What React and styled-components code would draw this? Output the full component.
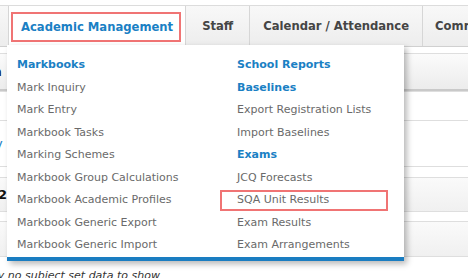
import styled, { createGlobalStyle, css } from 'styled-components';

const GlobalStyle = createGlobalStyle`
  html, body {
    margin: 0;
    padding: 0;
    background: #fff;
    font-family: "DejaVu Sans", Verdana, sans-serif;
  }
`;

const Page = styled.div`
  position: relative;
  width: 468px;
  height: 278px;
  overflow: hidden;
  padding-top: 5px;
  box-sizing: border-box;
`;

const NavBar = styled.nav`
  display: flex;
  height: 40px;
  border-top: 1px solid #dcdcdc;
  border-bottom: 1px solid #d0d0d0;
  background: linear-gradient(#f8f8f8, #ededed);
  padding-left: 8px;
`;

const NavItem = styled.div`
  position: relative;
  flex-shrink: 0;
  display: flex;
  align-items: center;
  justify-content: center;
  padding: 0 ${p => p.$pad || 12}px;
  border-left: 1px solid #d6d6d6;
  font-size: 11.6px;
  font-weight: bold;
  color: #454545;
  white-space: nowrap;

  ${p => p.$active && css`
    background: #fff;
    color: #1a80c4;
    margin-bottom: -1px;
    &::after {
      content: '';
      position: absolute;
      left: 2px;
      right: 4px;
      top: 6px;
      bottom: 5px;
      border: 2px solid #f07474;
    }
  `}
`;

const Content = styled.div`
  display: flex;
  flex-direction: column;
  padding-top: 6px;
`;

const Row = styled.div`
  display: flex;
  align-items: center;
  height: ${p => p.$h}px;
  border-top: 1px solid #dedede;
  font-size: 13px;
  font-weight: bold;
  color: #111;
  overflow: hidden;
  ${p => p.$header && css`
    background: linear-gradient(#fbfbfb, #ececec);
    border-bottom: 2px solid #c9c9c9;
  `}
  ${p => p.$shade && css`
    background: linear-gradient(#fafafa, #f0f0f0);
  `}
`;

const Clip = styled.span`
  margin-left: ${p => p.$shift}px;
  color: ${p => p.$color || '#111'};
  font-weight: ${p => p.$weight || 'bold'};
`;

const Note = styled.div`
  margin-top: 11px;
  font-size: 11px;
  font-style: italic;
  color: #333;
  white-space: nowrap;
  margin-left: -25px;
`;

const Dropdown = styled.div`
  position: absolute;
  top: 45px;
  left: 7px;
  width: 397px;
  box-sizing: border-box;
  padding: 9px 0 0 10px;
  background: #fff;
  border-bottom: 4px solid #1a7dc1;
  box-shadow: 3px 3px 6px rgba(0, 0, 0, 0.28);
  display: grid;
  grid-template-columns: 220px 1fr;
`;

const Column = styled.ul`
  list-style: none;
  margin: 0;
  padding: 0;
`;

const Entry = styled.li`
  position: relative;
  height: 22.5px;
  line-height: 22.5px;
  font-size: 11px;
  white-space: nowrap;
  color: ${p => (p.$heading ? '#1a80c4' : '#6a6a6a')};
  font-weight: ${p => (p.$heading ? 'bold' : 'normal')};

  ${p => p.$marked && css`
    &::after {
      content: '';
      position: absolute;
      left: -17px;
      width: 164px;
      top: 1px;
      height: 17px;
      border: 2px solid #f07474;
    }
  `}
`;

const left = [
  ['Markbooks', true],
  ['Mark Inquiry'],
  ['Mark Entry'],
  ['Markbook Tasks'],
  ['Marking Schemes'],
  ['Markbook Group Calculations'],
  ['Markbook Academic Profiles'],
  ['Markbook Generic Export'],
  ['Markbook Generic Import'],
];

const right = [
  ['School Reports', true],
  ['Baselines', true],
  ['Export Registration Lists'],
  ['Import Baselines'],
  ['Exams', true],
  ['JCQ Forecasts'],
  ['SQA Unit Results', false, true],
  ['Exam Results'],
  ['Exam Arrangements'],
];

const renderEntries = list =>
  list.map(([label, heading, marked]) => (
    <Entry key={label} $heading={heading} $marked={marked}>
      {label}
    </Entry>
  ));

export default function App() {
  return (
    <Page>
      <GlobalStyle />
      <NavBar>
        <NavItem $active>Academic Management</NavItem>
        <NavItem $pad={16}>Staff</NavItem>
        <NavItem $pad={13}>Calendar / Attendance</NavItem>
        <NavItem>Communications</NavItem>
      </NavBar>
      <Content>
        <Row $h={35} $header>
          <Clip $shift={-53}>Section</Clip>
        </Row>
        <Row $h={28} />
        <Row $h={45}>
          <Clip $shift={-5} $color="#1a80c4" $weight="normal">y</Clip>
        </Row>
        <Row $h={10} />
        <Row $h={33} $shade>
          <Clip $shift={-2}>2</Clip>
        </Row>
        <Row $h={9} />
        <Row $h={34} $shade />
        <Row $h={1} />
        <Note>Sorry no subject set data to show</Note>
      </Content>
      <Dropdown>
        <Column>{renderEntries(left)}</Column>
        <Column>{renderEntries(right)}</Column>
      </Dropdown>
    </Page>
  );
}
